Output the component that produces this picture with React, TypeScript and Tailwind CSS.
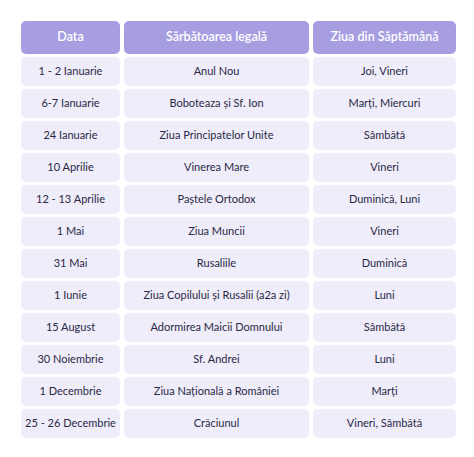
const rows: [string, string, string][] = [
  ["1 - 2 Ianuarie", "Anul Nou", "Joi, Vineri"],
  ["6-7 Ianuarie", "Boboteaza și Sf. Ion", "Marți, Miercuri"],
  ["24 Ianuarie", "Ziua Principatelor Unite", "Sâmbătă"],
  ["10 Aprilie", "Vinerea Mare", "Vineri"],
  ["12 - 13 Aprilie", "Paștele Ortodox", "Duminică, Luni"],
  ["1 Mai", "Ziua Muncii", "Vineri"],
  ["31 Mai", "Rusaliile", "Duminică"],
  ["1 Iunie", "Ziua Copilului și Rusalii (a2a zi)", "Luni"],
  ["15 August", "Adormirea Maicii Domnului", "Sâmbătă"],
  ["30 Noiembrie", "Sf. Andrei", "Luni"],
  ["1 Decembrie", "Ziua Națională a României", "Marți"],
  ["25 - 26 Decembrie", "Crăciunul", "Vineri, Sâmbătă"],
];

export default function App() {
  return (
    <div className="w-[474px] h-[457px] bg-white pt-[21px] pl-[21px] font-['Lato','Liberation_Sans',sans-serif]">
      <div className="grid grid-cols-[99px_185px_143px] gap-x-[4px] gap-y-[3px]">
        {["Data", "Sărbătoarea legală", "Ziua din Săptămână"].map((h) => (
          <div
            key={h}
            className="h-[33px] rounded-[5px] bg-[#a69ee0] flex items-center justify-center text-white text-[12.5px] font-semibold"
          >
            {h}
          </div>
        ))}
        {rows.map((r) =>
          r.map((c, i) => (
            <div
              key={r[0] + i}
              className="h-[29px] rounded-[5px] bg-[#eeedf9] flex items-center justify-center text-[#2b2846] text-[11px]"
            >
              {c}
            </div>
          ))
        )}
      </div>
    </div>
  );
}
